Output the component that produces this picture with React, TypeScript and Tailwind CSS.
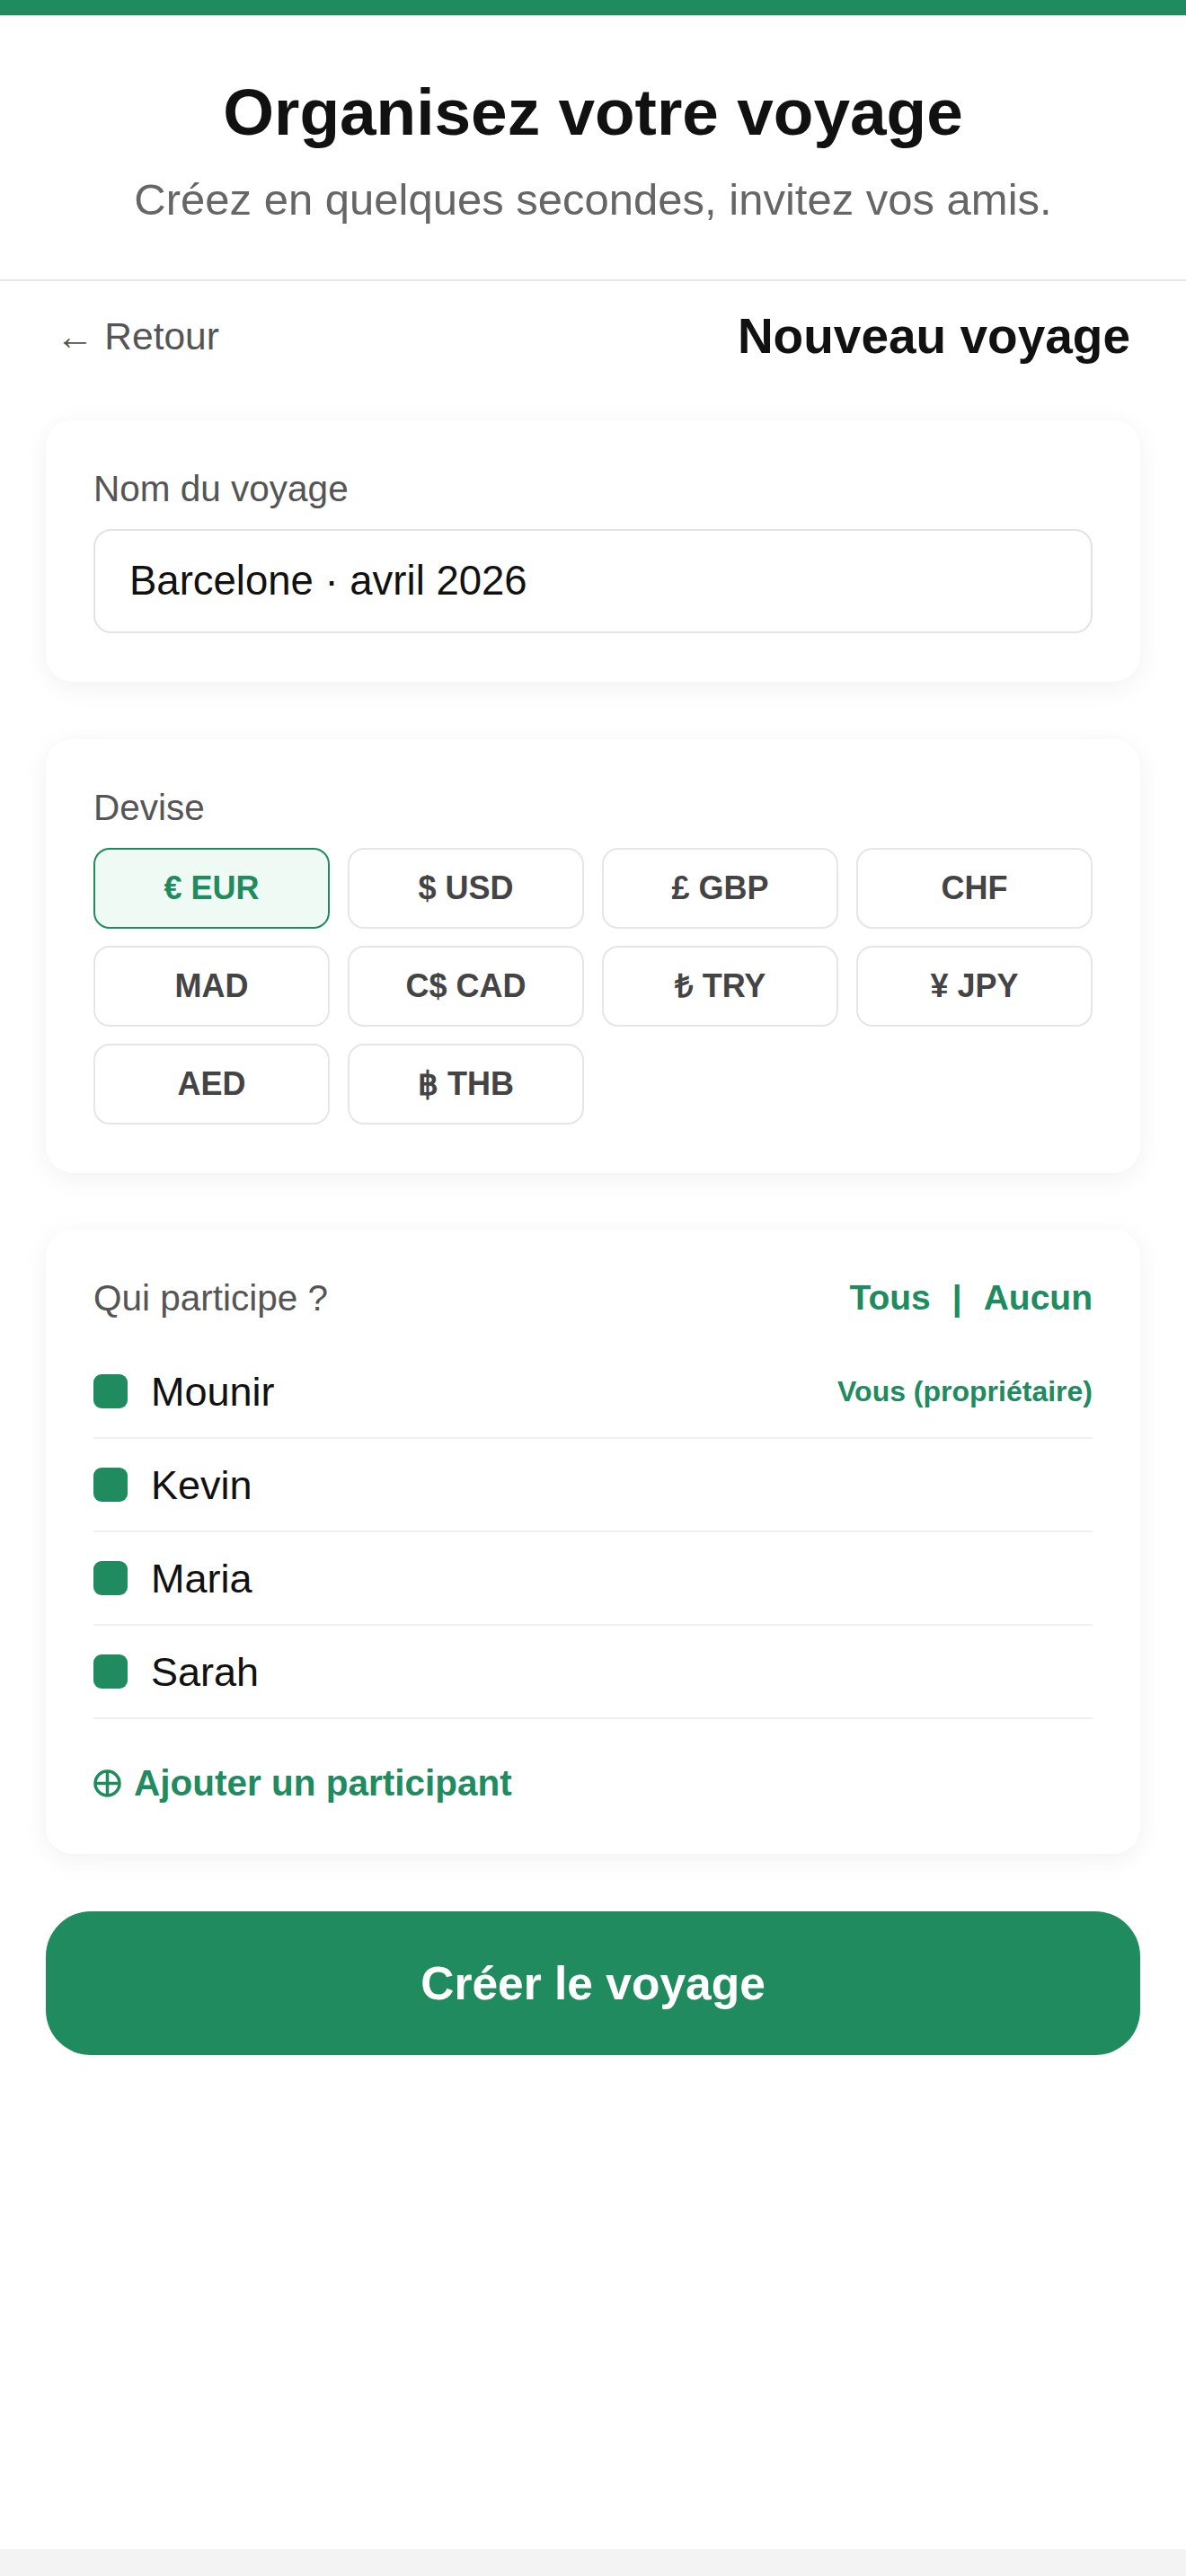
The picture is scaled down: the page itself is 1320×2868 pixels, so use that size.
import React from "react";

const currencies = [
  { code: "EUR", label: "€ EUR" },
  { code: "USD", label: "$ USD" },
  { code: "GBP", label: "£ GBP" },
  { code: "CHF", label: "CHF" },
  { code: "MAD", label: "MAD" },
  { code: "CAD", label: "C$ CAD" },
  { code: "TRY", label: "₺ TRY" },
  { code: "JPY", label: "¥ JPY" },
  { code: "AED", label: "AED" },
  { code: "THB", label: "฿ THB" },
];

const participants = [
  { name: "Mounir", owner: true },
  { name: "Kevin", owner: false },
  { name: "Maria", owner: false },
  { name: "Sarah", owner: false },
];

function PlusCircle() {
  return (
    <svg width="31" height="31" viewBox="0 0 31 31" fill="none" stroke="#208b5f" strokeWidth="3.5">
      <circle cx="15.5" cy="15.5" r="13.5" />
      <line x1="15.5" y1="2" x2="15.5" y2="29" />
      <line x1="2" y1="15.5" x2="29" y2="15.5" />
    </svg>
  );
}

export default function App() {
  const selected = "EUR";

  return (
    <div className="min-h-[2868px] bg-[#f3f3f3] font-['Liberation_Sans',Arial,sans-serif]">
      <div className="min-h-[2838px] bg-white">
        <div className="h-[17px] bg-[#208b5f]" />

        <header className="border-b-2 border-[#e5e5e5] pt-[64px] pb-[60px] text-center">
          <h1 className="text-[73px] font-bold leading-[1.2] text-[#111]">Organisez votre voyage</h1>
          <p className="mt-[24px] text-[49px] leading-[1.2] text-[#666]">
            Créez en quelques secondes, invitez vos amis.
          </p>
        </header>

        <nav className="flex items-center justify-between px-[62px] pt-[28px]">
          <span className="text-[42.5px] leading-[1.2] text-[#555]">← Retour</span>
          <span className="text-[55px] font-bold leading-[1.2] text-[#111]">Nouveau voyage</span>
        </nav>

        <main className="px-[51px] pt-[61px]">
          <section className="rounded-[30px] bg-white px-[53px] pt-[52px] pb-[54px] shadow-[0_6px_30px_rgba(0,0,0,0.06)]">
            <div className="mb-[21px] text-[40.5px] leading-[48px] text-[#555]">Nom du voyage</div>
            <div className="flex h-[116px] items-center rounded-[20px] border-2 border-[#e3e3e3] px-[38px] text-[45.5px] text-[#111]">
              Barcelone · avril 2026
            </div>
          </section>

          <section className="mt-[64px] rounded-[30px] bg-white px-[53px] pt-[52px] pb-[54px] shadow-[0_6px_30px_rgba(0,0,0,0.06)]">
            <div className="mb-[21px] text-[40.5px] leading-[48px] text-[#555]">Devise</div>
            <div className="grid grid-cols-4 gap-x-[20px] gap-y-[19px]">
              {currencies.map((c) =>
                c.code === selected ? (
                  <div
                    key={c.code}
                    className="flex h-[90px] items-center justify-center rounded-[18px] border-2 border-[#208b5f] bg-[#f0faf5] text-[36px] font-bold text-[#208b5f]"
                  >
                    {c.label}
                  </div>
                ) : (
                  <div
                    key={c.code}
                    className="flex h-[90px] items-center justify-center rounded-[18px] border-2 border-[#e6e6e6] bg-white text-[36px] font-bold text-[#444]"
                  >
                    {c.label}
                  </div>
                )
              )}
            </div>
          </section>

          <section className="mt-[63px] rounded-[30px] bg-white px-[53px] pt-[52px] pb-[55px] shadow-[0_6px_30px_rgba(0,0,0,0.06)]">
            <div className="flex h-[48px] items-center justify-between">
              <span className="text-[40.5px] text-[#555]">Qui participe ?</span>
              <div className="flex items-center gap-[24px] text-[39px] font-bold text-[#208b5f]">
                <span>Tous</span>
                <span>|</span>
                <span>Aucun</span>
              </div>
            </div>

            <div className="mt-[29px]">
              {participants.map((p) => (
                <div key={p.name} className="flex h-[104px] items-center border-b-2 border-[#f0f0f0]">
                  <div className="h-[38px] w-[38px] rounded-[9px] bg-[#208b5f]" />
                  <span className="ml-[26px] text-[45px] text-[#111]">{p.name}</span>
                  {p.owner && (
                    <span className="ml-auto text-[32px] font-bold text-[#208b5f]">Vous (propriétaire)</span>
                  )}
                </div>
              ))}
            </div>

            <div className="mt-[47px] flex items-center gap-[14px] text-[40.5px] font-bold leading-[48px] text-[#208b5f]">
              <PlusCircle />
              <span>Ajouter un participant</span>
            </div>
          </section>

          <button className="mt-[64px] flex h-[160px] w-full items-center justify-center rounded-[50px] bg-[#208b5f] text-[51.5px] font-bold text-white">
            Créer le voyage
          </button>
        </main>
      </div>
    </div>
  );
}
